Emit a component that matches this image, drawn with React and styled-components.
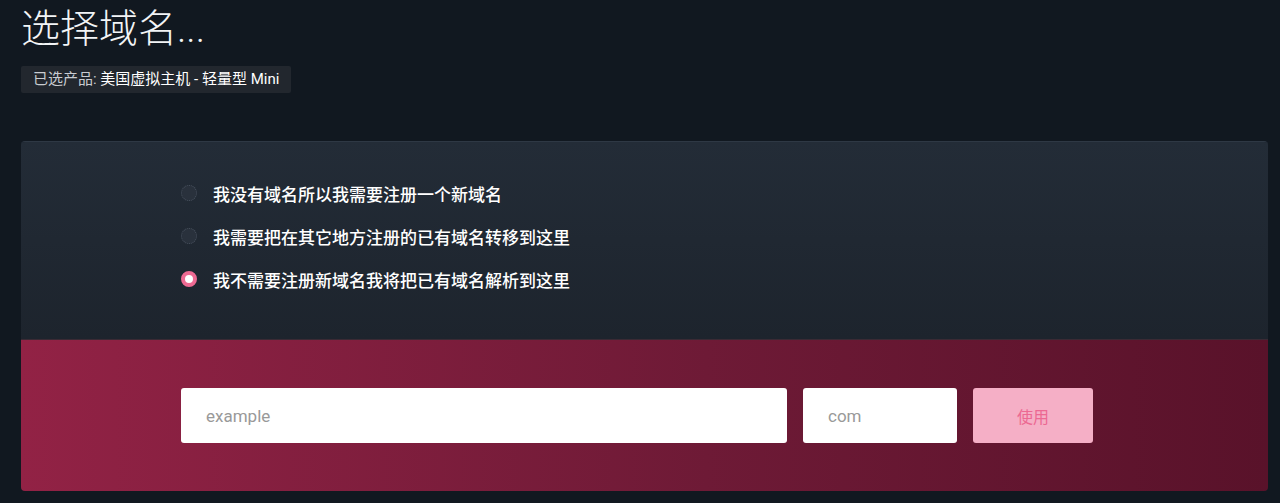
import React, { useState } from 'react';
import styled, { createGlobalStyle } from 'styled-components';

const GlobalStyle = createGlobalStyle`
  html, body {
    margin: 0;
    padding: 0;
    background: #111820;
  }
  body {
    font-family: Roboto, "Noto Sans CJK SC", "Liberation Sans", sans-serif;
    color: #fff;
  }
`;

const Page = styled.div`
  padding: 0 12px 0 21px;
`;

const Title = styled.h1`
  margin: 0;
  padding-top: 3px;
  font-size: 39px;
  font-weight: 300;
  line-height: 52px;
  color: #f2f4f6;
`;

const Badge = styled.div`
  display: inline-block;
  margin-top: 11px;
  padding: 0 12px;
  height: 27px;
  line-height: 27px;
  font-size: 15px;
  background: #22272e;
  border-radius: 2px;
  color: #fff;

  span {
    color: #c9ccd1;
  }
`;

const Card = styled.div`
  margin-top: 48px;
  border-radius: 4px;
  overflow: hidden;
  border-top: 1px solid #2e3844;
`;

const Options = styled.div`
  background: linear-gradient(180deg, #232c37 0%, #1d242d 100%);
  padding: 39px 160px 48px;
  display: flex;
  flex-direction: column;
  gap: 19px;
  border-bottom: 1px solid #3a2a34;
`;

const Option = styled.label`
  display: flex;
  align-items: center;
  gap: 16px;
  height: 24px;
  font-size: 17px;
  font-weight: 500;
  color: #fff;
  cursor: pointer;
`;

const Radio = styled.span`
  width: 16px;
  height: 16px;
  border-radius: 50%;
  box-sizing: border-box;
  background: ${p => (p.$checked ? '#fff' : '#29313c')};
  border: ${p => (p.$checked ? '4px solid #ee6a93' : '1px dotted #4a5360')};
`;

const Form = styled.div`
  background: linear-gradient(90deg, #922245 0%, #6e1a36 55%, #59122a 100%);
  padding: 48px 160px 48px;
  display: flex;
  gap: 16px;
`;

const Input = styled.input`
  width: ${p => p.$w}px;
  height: 55px;
  box-sizing: border-box;
  border: none;
  border-radius: 3px;
  background: #fff;
  padding: 0 25px;
  font-family: Roboto, "Noto Sans CJK SC", sans-serif;
  font-size: 17px;
  color: #333;
  outline: none;

  &::placeholder {
    color: #999;
  }
`;

const Button = styled.button`
  width: 120px;
  height: 55px;
  border: none;
  border-radius: 3px;
  background: #f5afc6;
  color: #ec6892;
  font-family: "Noto Sans CJK SC", sans-serif;
  font-size: 16px;
  cursor: pointer;
`;

const options = [
  '我没有域名所以我需要注册一个新域名',
  '我需要把在其它地方注册的已有域名转移到这里',
  '我不需要注册新域名我将把已有域名解析到这里',
];

const App = () => {
  const [selected, setSelected] = useState(2);

  return (
    <>
      <GlobalStyle />
      <Page>
        <Title>选择域名...</Title>
        <Badge>
          <span>已选产品: </span>美国虚拟主机 - 轻量型 Mini
        </Badge>
        <Card>
          <Options>
            {options.map((text, i) => (
              <Option key={i} onClick={() => setSelected(i)}>
                <Radio $checked={selected === i} />
                {text}
              </Option>
            ))}
          </Options>
          <Form>
            <Input $w={606} placeholder="example" />
            <Input $w={154} placeholder="com" />
            <Button>使用</Button>
          </Form>
        </Card>
      </Page>
    </>
  );
};

export default App;
